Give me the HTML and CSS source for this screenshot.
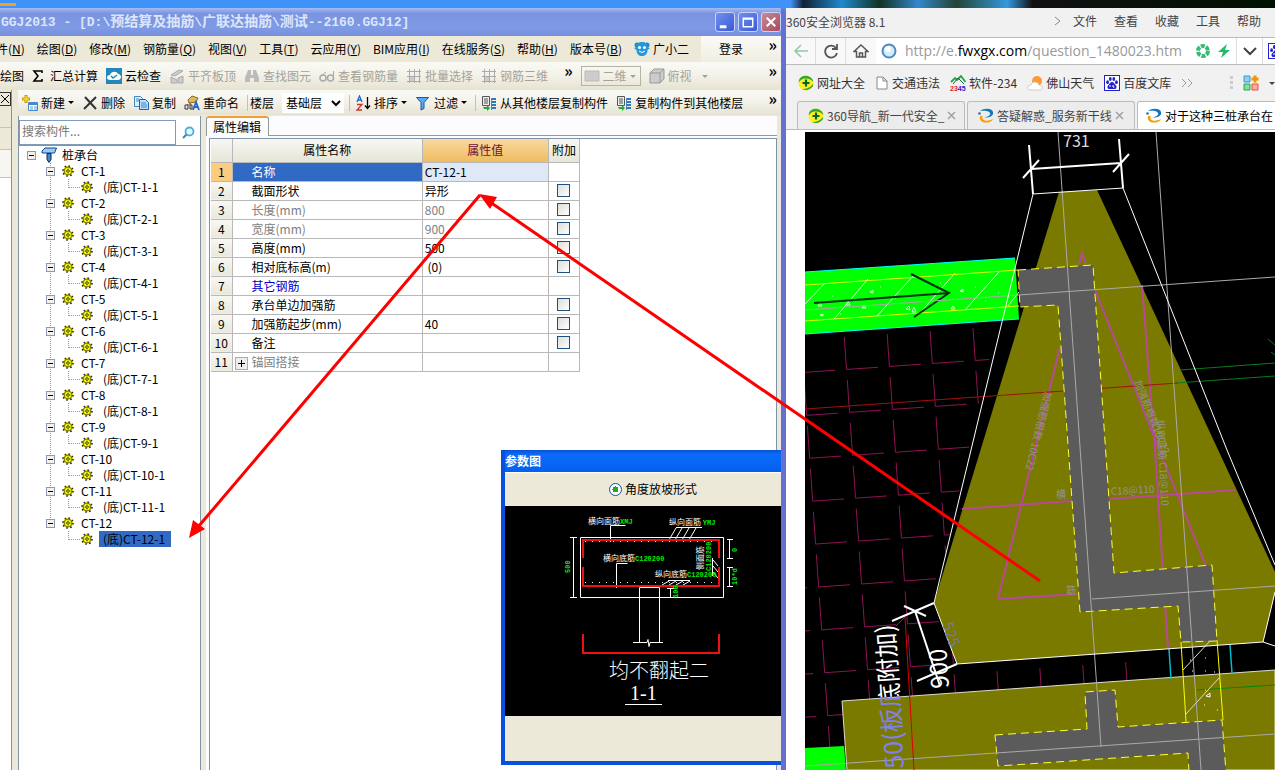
FILE: index.html
```
<!DOCTYPE html>
<html lang="zh-CN">

<head>
    <meta charset="UTF-8" />
    <title>GGJ2013</title>
    <link rel="stylesheet" href="styles.css">
</head>

<body>
    <svg class="defs" aria-hidden="true">
        <symbol id="gear" viewBox="0 0 12 12">
            <circle cx="6" cy="6" r="5" fill="#ff0" stroke="#222" stroke-width="1.6" stroke-dasharray="1.6 2.3" />
            <circle cx="6" cy="6" r="3.9" fill="#ff0" stroke="#332" stroke-width="0.7" />
            <path d="M6 2.5v7M2.5 6h7" stroke="#776" stroke-width="0.6" />
            <circle cx="6" cy="6" r="1.3" fill="#ff0" stroke="#222" stroke-width="0.8" />
        </symbol>
        <symbol id="paw" viewBox="0 0 16 16">
            <rect x="0.5" y="0.5" width="15" height="15" fill="#fff" stroke="#22c" />
            <ellipse cx="3.6" cy="7.2" rx="1.4" ry="1.9" fill="#22c" />
            <ellipse cx="6.3" cy="4" rx="1.4" ry="2" fill="#22c" />
            <ellipse cx="9.8" cy="4" rx="1.4" ry="2" fill="#22c" />
            <ellipse cx="12.4" cy="7.2" rx="1.4" ry="1.9" fill="#22c" />
            <path d="M8 7c2 0 2.3 2 4 3.4 1.2 1.6.2 3.6-1.6 3.6H5.6C3.8 14 2.8 12 4 10.4 5.7 9 6 7 8 7z" fill="#22c" />
            <path d="M6 10v2M9 10v2h1.5" stroke="#fff" fill="none" />
        </symbol>
        <symbol id="plus360" viewBox="0 0 16 16">
            <circle cx="8" cy="8" r="7.5" fill="#fe2" />
            <path d="M2 3a8 8 0 0 1 13.4 4C12 3 6 2.500 3 5 1.500 6.500.8 7 .6 7A8 8 0 0 1 2 3zM15 11a8 8 0 0 1-11 3c4 0 8-1 11-5z" fill="#3a3" />
            <path d="M8 4.5v7M4.5 8h7" stroke="#063" stroke-width="2.2" />
        </symbol>
        <symbol id="swirl" viewBox="0 0 16 16">
            <path d="M2 3C6 0 14 0 15 4c1 4-4 6-9 5.500C10 9 13 7 12 5 10 2 5 3 2 3z" fill="#17b" />
            <circle cx="1.500" cy="5.500" r="1.300" fill="#17b" />
            <path d="M2 8c-1 5 3 7 7 6.500 3 0 5-1.500 6-3.500-3 1.500-6 2-8 1.500C5 12 4 11 4.500 8z" fill="#f90" />
        </symbol>
        <symbol id="floors" viewBox="0 0 16 16">
            <path d="M1.500 1.500h7v9h-7z" fill="#eee" stroke="#555" />
            <path d="M3 4h4M3 6h4M3 8h4" stroke="#555" />
            <path d="M10 4h5M10 7h5M10 10h5M10 13h5" stroke="#37b" stroke-width="2" />
            <path d="M10.500 3v12" stroke="#48c" />
            <path d="M2 12h4v-2l3 3-3 3v-2H3z" fill="#2a3" />
        </symbol>
        <symbol id="grid3" viewBox="0 0 16 16">
            <path d="M1 3.500h14M1 8.500h14M1 13.500h14M3.500 1v14M8.500 1v14M13.500 1v14" stroke="#aaa" fill="none" />
            <path d="M4 9h4v4H4z" fill="#ccc" />
        </symbol>
    </svg>

    <div class="desktop">
        <div class="app">
            <div class="titlebar">
                <span class="title">GGJ2013 - [D:\<span>预结算及抽筋</span>\<span>广联达抽筋</span>\<span>测试</span>--2160.GGJ12]</span>
                <button class="win-btn" aria-label="Minimize"><svg viewBox="0 0 19 19"><path d="M4 13h7v3H4z" fill="#fff" /></svg></button>
                <button class="win-btn" aria-label="Maximize"><svg viewBox="0 0 19 19"><path d="M4.500 5.500h10v9h-10zM4 6.500h11" fill="none" stroke="#fff" stroke-width="1.500" /></svg></button>
                <button class="win-btn close" aria-label="Close"><svg viewBox="0 0 19 19"><path d="M5 5l9 9M14 5l-9 9" stroke="#fff" stroke-width="2.200" /></svg></button>
            </div>

            <div class="menubar">
                <button>件(<u>N</u>)</button>
                <button>绘图(<u>D</u>)</button>
                <button>修改(<u>M</u>)</button>
                <button>钢筋量(<u>Q</u>)</button>
                <button>视图(<u>V</u>)</button>
                <button>工具(<u>T</u>)</button>
                <button>云应用(<u>Y</u>)</button>
                <button>BIM应用(<u>I</u>)</button>
                <button>在线服务(<u>S</u>)</button>
                <button>帮助(<u>H</u>)</button>
                <button>版本号(<u>B</u>)</button>
                <button class="assistant"><svg class="icon" viewBox="0 0 16 16"><circle cx="3" cy="4" r="2.500" fill="#28c" /><circle cx="13" cy="4" r="2.500" fill="#28c" /><path d="M8 1c4 0 5 2 5.500 5l2.500 1-2.500 2c0 4-2.500 6-5.500 6s-5.500-2-5.500-6L0 7l2.500-1C3 3 4 1 8 1z" fill="#29d" /><circle cx="5.500" cy="6.500" r="1.500" fill="#fff" /><circle cx="10.500" cy="6.500" r="1.500" fill="#fff" /><path d="M5 10q3 3 6 0" stroke="#fff" fill="none" /></svg>广小二</button>
                <div class="account"><button>登录</button><span class="more">»</span></div>
            </div>

            <div class="toolbar">
                <button>绘图</button>
                <button><svg class="sigma" viewBox="0 0 10 12"><path d="M9 3V1H1l4 5-4 5h8V9" fill="none" stroke="#000" stroke-width="1.600" /></svg>汇总计算</button>
                <button><svg class="icon" viewBox="0 0 16 16"><path d="M0 0h16v16H0z" fill="#28b" /><path d="M4 12c-4 0-4-5 0-5 1-4 7-4 8-1 4 0 4 6 0 6z" fill="#fff" /><path d="M5 8l2 2 4-3" stroke="#28b" fill="none" stroke-width="1.500" /></svg>云检查</button>
                <button disabled><svg class="icon" viewBox="0 0 16 16"><path d="M2 7l8-5 4 1-8 5zM2 15V9l6 3v3zM9 15v-5l5-2v7z" fill="#ccc" stroke="#aaa" /></svg>平齐板顶</button>
                <button disabled><svg class="icon" viewBox="0 0 16 16"><path d="M4 2h3v5h2V2h3l3 8v4h-5v-4H6v4H1v-4z" fill="#bbb" /></svg>查找图元</button>
                <button disabled><svg class="icon" viewBox="0 0 16 16"><path d="M1 9l6-5M14.500 3v7" fill="none" stroke="#aaa" /><circle cx="4" cy="10" r="3" fill="none" stroke="#aaa" stroke-width="1.500" /><circle cx="11.500" cy="10" r="3" fill="none" stroke="#aaa" stroke-width="1.500" /></svg>查看钢筋量</button>
                <button disabled><svg class="icon"><use href="#grid3" /></svg>批量选择</button>
                <button disabled><svg class="icon"><use href="#grid3" /></svg>钢筋三维</button>
                <span class="more inner">»</span>
                <button class="view-mode" disabled><svg class="icon" viewBox="0 0 16 16"><path d="M1 3h14v10H1z" fill="#ccc" stroke="#bbb" /></svg>二维<i class="caret"></i></button>
                <button disabled><svg class="icon" viewBox="0 0 16 16"><path d="M1 5l4-4h10v10l-4 4H1zM1 5h10v10M11 5l4-4" fill="#ccc" stroke="#999" /></svg>俯视<i class="caret far"></i></button>
                <span class="more">»</span>
            </div>

            <div class="workspace">
                <div class="dock">
                    <button class="dock-close" aria-label="关闭"><svg viewBox="0 0 10 10"><path d="M1 1l8 8M9 1l-8 8" stroke="#000" /></svg></button>
                    <div class="dock-row"></div>
                    <div class="dock-row"></div>
                    <div class="dock-row light"></div>
                    <div class="dock-body"></div>
                </div>

                <div class="editor">
                    <div class="toolbar second">
                        <button><svg class="icon" viewBox="0 0 16 16"><path d="M4 0v8M0 4h8" stroke="#c90" stroke-width="3" /><path d="M4 1v6M1 4h6" stroke="#fe5" /><path d="M6.500 7.500h9v8h-9z" fill="#fff" stroke="#48c" /><path d="M7 8h8v2H7z" fill="#48c" /><path d="M8 12h3M8 14h3M12 12h3M12 14h3" stroke="#69c" /></svg>新建<i class="caret"></i></button>
                        <button><svg class="icon" viewBox="0 0 16 16"><path d="M3 2l11 12M14 2L2 14" stroke="#333" stroke-width="2" fill="none" /></svg>删除</button>
                        <button><svg class="icon" viewBox="0 0 16 16"><path d="M1.500 1.500h6l2 2v8h-8z" fill="#def" stroke="#48b" /><path d="M6.500 4.500h6l3 3v7h-9z" fill="#bdf" stroke="#269" /><path d="M8 8h5M8 10h6M8 12h6M3 4h3M3 6h3" stroke="#48b" /></svg>复制</button>
                        <button><svg class="icon" viewBox="0 0 16 16"><path d="M4 5l4-4 6 2-2 4-7 1z" fill="#db5" stroke="#863" /><path d="M9 15l3-8 3 8M10 12h4" stroke="#26c" stroke-width="1.800" fill="none" /><path d="M4 10H1v4h3zV9M6 8v6h2v-4H6" stroke="#333" fill="none" /></svg>重命名</button>
                        <label class="floor" for="floor">楼层</label>
                        <select id="floor"><option>基础层</option></select>
                        <button class="split"><svg class="icon" viewBox="0 0 16 16"><path d="M2 7l2.500-6L7 7M3 5h3" stroke="#26c" fill="none" stroke-width="1.300" /><path d="M2 9.500h5L2 15h5" stroke="#c33" fill="none" stroke-width="1.300" /><path d="M12.500 2v11M10 10.500l2.500 3 2.500-3" stroke="#000" fill="none" stroke-width="1.300" /></svg>排序<i class="caret"></i></button>
                        <button><svg class="icon" viewBox="0 0 16 16"><path d="M1.500 2.500h12l-4.500 5v6l-3 1.500V7.500z" fill="#5af" stroke="#258" /></svg>过滤<i class="caret"></i></button>
                        <button class="split"><svg class="icon"><use href="#floors" /></svg>从其他楼层复制构件</button>
                        <button><svg class="icon"><use href="#floors" /></svg>复制构件到其他楼层</button>
                        <span class="more">»</span>
                    </div>

                    <div class="panels">
                        <div class="components">
                            <div class="search">
                                <input type="text" placeholder="搜索构件..." aria-label="搜索构件">
                                <button aria-label="搜索"><svg viewBox="0 0 14 14"><circle cx="8.500" cy="5.500" r="4" fill="#dff" stroke="#5ad" stroke-width="1.800" /><path d="M5.500 8.500L2 12" stroke="#48b" stroke-width="2.200" /></svg></button>
                            </div>
                            <div class="tree">
                                <div class="node root"><button class="toggle" aria-label="折叠"></button><svg class="icon" viewBox="0 0 16 16"><path d="M1 4l3-3h11.500l-2 5H1z" fill="#9ce" stroke="#149" /><path d="M6 6.500h4v6l-2 3-2-3z" fill="#48c" stroke="#125" /></svg>桩承台</div>
                                <div class="branches">
                                    <div class="node"><button class="toggle" aria-label="折叠"></button><svg class="gear"><use href="#gear" /></svg><span>CT-1</span></div>
                                    <div class="node leaf"><i class="elbow"></i><svg class="gear"><use href="#gear" /></svg><span>(底)CT-1-1</span></div>
                                    <div class="node"><button class="toggle" aria-label="折叠"></button><svg class="gear"><use href="#gear" /></svg><span>CT-2</span></div>
                                    <div class="node leaf"><i class="elbow"></i><svg class="gear"><use href="#gear" /></svg><span>(底)CT-2-1</span></div>
                                    <div class="node"><button class="toggle" aria-label="折叠"></button><svg class="gear"><use href="#gear" /></svg><span>CT-3</span></div>
                                    <div class="node leaf"><i class="elbow"></i><svg class="gear"><use href="#gear" /></svg><span>(底)CT-3-1</span></div>
                                    <div class="node"><button class="toggle" aria-label="折叠"></button><svg class="gear"><use href="#gear" /></svg><span>CT-4</span></div>
                                    <div class="node leaf"><i class="elbow"></i><svg class="gear"><use href="#gear" /></svg><span>(底)CT-4-1</span></div>
                                    <div class="node"><button class="toggle" aria-label="折叠"></button><svg class="gear"><use href="#gear" /></svg><span>CT-5</span></div>
                                    <div class="node leaf"><i class="elbow"></i><svg class="gear"><use href="#gear" /></svg><span>(底)CT-5-1</span></div>
                                    <div class="node"><button class="toggle" aria-label="折叠"></button><svg class="gear"><use href="#gear" /></svg><span>CT-6</span></div>
                                    <div class="node leaf"><i class="elbow"></i><svg class="gear"><use href="#gear" /></svg><span>(底)CT-6-1</span></div>
                                    <div class="node"><button class="toggle" aria-label="折叠"></button><svg class="gear"><use href="#gear" /></svg><span>CT-7</span></div>
                                    <div class="node leaf"><i class="elbow"></i><svg class="gear"><use href="#gear" /></svg><span>(底)CT-7-1</span></div>
                                    <div class="node"><button class="toggle" aria-label="折叠"></button><svg class="gear"><use href="#gear" /></svg><span>CT-8</span></div>
                                    <div class="node leaf"><i class="elbow"></i><svg class="gear"><use href="#gear" /></svg><span>(底)CT-8-1</span></div>
                                    <div class="node"><button class="toggle" aria-label="折叠"></button><svg class="gear"><use href="#gear" /></svg><span>CT-9</span></div>
                                    <div class="node leaf"><i class="elbow"></i><svg class="gear"><use href="#gear" /></svg><span>(底)CT-9-1</span></div>
                                    <div class="node"><button class="toggle" aria-label="折叠"></button><svg class="gear"><use href="#gear" /></svg><span>CT-10</span></div>
                                    <div class="node leaf"><i class="elbow"></i><svg class="gear"><use href="#gear" /></svg><span>(底)CT-10-1</span></div>
                                    <div class="node"><button class="toggle" aria-label="折叠"></button><svg class="gear"><use href="#gear" /></svg><span>CT-11</span></div>
                                    <div class="node leaf"><i class="elbow"></i><svg class="gear"><use href="#gear" /></svg><span>(底)CT-11-1</span></div>
                                    <div class="node"><button class="toggle" aria-label="折叠"></button><svg class="gear"><use href="#gear" /></svg><span>CT-12</span></div>
                                    <div class="node leaf selected"><i class="elbow"></i><svg class="gear"><use href="#gear" /></svg><span>(底)CT-12-1</span></div>
                                </div>
                            </div>
                        </div>

                        <div class="properties">
                            <div class="prop-tabs"><button>属性编辑</button></div>
                            <div class="prop-body">
                                <table>
                                    <thead>
                                        <tr><th class="num"></th><th class="name">属性名称</th><th class="value">属性值</th><th class="extra">附加</th></tr>
                                    </thead>
                                    <tbody>
                                        <tr class="current"><th>1</th><td>名称</td><td>CT-12-1</td><td></td></tr>
                                        <tr><th>2</th><td>截面形状</td><td>异形</td><td><input type="checkbox" aria-label="截面形状"></td></tr>
                                        <tr class="dim"><th>3</th><td>长度(mm)</td><td>800</td><td><input type="checkbox" aria-label="长度"></td></tr>
                                        <tr class="dim"><th>4</th><td>宽度(mm)</td><td>900</td><td><input type="checkbox" aria-label="宽度"></td></tr>
                                        <tr><th>5</th><td>高度(mm)</td><td>500</td><td><input type="checkbox" aria-label="高度"></td></tr>
                                        <tr><th>6</th><td>相对底标高(m)</td><td>&nbsp;(0)</td><td><input type="checkbox" aria-label="相对底标高"></td></tr>
                                        <tr class="link"><th>7</th><td>其它钢筋</td><td></td><td></td></tr>
                                        <tr><th>8</th><td>承台单边加强筋</td><td></td><td><input type="checkbox" aria-label="承台单边加强筋"></td></tr>
                                        <tr><th>9</th><td>加强筋起步(mm)</td><td>40</td><td><input type="checkbox" aria-label="加强筋起步"></td></tr>
                                        <tr><th>10</th><td>备注</td><td></td><td><input type="checkbox" aria-label="备注"></td></tr>
                                        <tr class="dim group"><th>11</th><td><button class="expand" aria-label="展开"></button>锚固搭接</td><td></td><td></td></tr>
                                    </tbody>
                                </table>
                            </div>
                        </div>
                    </div>
                </div>
            </div>

            <div class="dialog">
                <div class="dialog-title">参数图</div>
                <div class="dialog-options"><label><input type="radio" checked>角度放坡形式</label></div>
                <svg class="section" viewBox="505 506 276 210">
                    <g fill="none" stroke="#fff">
                        <path d="M580.500 537.500h143v60h-143zM573.500 537v61M570 537.500h7M570 597.500h7M639.500 597v-9.500h20V597M639.500 597v45M659.500 597v45M633 642.500h14l1-3 1 7 1-4h13" />
                        <path d="M610.500 542v-16.500h15M616.500 588v-24.500h11M669 540l7-12M675 540l7-12M682 540l7-12M689 540l7-12M676 527.500h26M662 585l7-4M669 585l7-4M676 585l7-4M683 585l7-4M668 580.500h22M667 588.500h7M670.500 588v9M727 539.500h6M729.500 540v19M727 558.500h6M727 567.500h6M729.500 568v18M727 586.500h6M712.500 558v18M713 560l5 6M713 566l5 6M713 572l5 6M625 704.500h37" />
                    </g>
                    <g fill="none" stroke="#e11" stroke-width="2">
                        <path d="M583 558v-18h136v18M583 567v19h136v-19M583 634v19h136v-19" />
                    </g>
                    <path d="M585 541.500h132M585 582.500h132" stroke="#eee" stroke-dasharray="1 6" />
                    <g class="label">
                        <text x="588" y="524">横向面筋<tspan>XMJ</tspan></text>
                        <text x="669" y="525">纵向面筋 <tspan>YMJ</tspan></text>
                        <text x="603" y="561">横向底筋<tspan>C120200</tspan></text>
                        <text x="655" y="577">纵向底筋<tspan>C120200</tspan></text>
                        <text transform="translate(703 570) rotate(-90)">侧面筋</text>
                        <text transform="translate(711 571) rotate(-90)"><tspan>C120200</tspan></text>
                        <text transform="translate(570 573) rotate(-90)"><tspan>500</tspan></text>
                        <text transform="translate(737 552) rotate(-90)"><tspan>0</tspan></text>
                        <text transform="translate(737 585) rotate(-90)"><tspan>10*d</tspan></text>
                        <text transform="translate(678 598) rotate(-90)"><tspan>100</tspan></text>
                    </g>
                    <text class="caption" x="609" y="678">均不翻起二</text>
                    <text class="caption small" x="630" y="700">1-1</text>
                </svg>
                <div class="dialog-footer"></div>
            </div>
        </div>

        <div class="browser">
            <div class="browser-title">
                <span class="name">360安全浏览器 8.1</span>
                <svg class="angle" viewBox="0 0 8 10"><path d="M1 1l5 4-5 4" fill="none" stroke="#888" /></svg>
                <button>文件</button>
                <button>查看</button>
                <button>收藏</button>
                <button>工具</button>
                <button>帮助</button>
            </div>
            <div class="address">
                <button aria-label="后退"><svg viewBox="0 0 16 16"><path d="M15 8H2M8 2L2 8l6 6" fill="none" stroke="#8dcaa5" stroke-width="1.500" /></svg></button>
                <button aria-label="刷新"><svg viewBox="0 0 16 16"><path d="M13 5a6 6 0 1 0 1 5M14 1v5H9" fill="none" stroke="#555" stroke-width="1.800" /></svg></button>
                <button class="home" aria-label="主页"><svg viewBox="0 0 16 16"><path d="M1 8.500L8 2l7 6.500h-2.500V14h-9V8.500zM6.500 14v-4h3v4" fill="none" stroke="#555" stroke-width="1.500" /></svg></button>
                <svg class="globe" viewBox="0 0 16 16"><circle cx="8" cy="8" r="6.500" fill="#cef" stroke="#58b" stroke-width="2" /><circle cx="7" cy="6" r="3" fill="#fff" /></svg>
                <div class="url" role="textbox" aria-label="地址" contenteditable="true">http://e.<b>fwxgx.com</b>/question_1480023.htm</div>
                <svg class="tool" viewBox="0 0 16 16"><circle cx="8" cy="8" r="5" fill="none" stroke="#3b7" stroke-width="4" stroke-dasharray="4 1.200" /></svg>
                <svg class="tool" viewBox="0 0 16 16"><path d="M11 1L2 9h5l-2 6 9-8H9z" fill="#2b6" /></svg>
                <button class="drop" aria-label="展开"><svg viewBox="0 0 16 16"><path d="M2 5l6 6 6-6" fill="none" stroke="#444" stroke-width="2" /></svg></button>
                <svg class="engine" viewBox="0 0 16 16"><use href="#paw" /></svg>
            </div>
            <div class="bookmarks">
                <a href="#"><svg class="icon"><use href="#plus360" /></svg>网址大全</a>
                <a href="#"><svg class="page" viewBox="0 0 12 14"><path d="M1 1h6l4 4v8H1zM7 1v4h4" fill="#fff" stroke="#888" /></svg>交通违法</a>
                <a href="#"><svg class="icon" viewBox="0 0 16 16"><path d="M1 7l4-4 2 2 4-4 4.500 6" fill="none" stroke="#2a4" stroke-width="1.800" /><path d="M3 9l5-6 6 6" fill="none" stroke="#164" /><text class="logo" x="0" y="16"><tspan fill="#d22">23</tspan><tspan fill="#22c">45</tspan></text></svg>软件-234</a>
                <a href="#"><svg class="icon" viewBox="0 0 16 16"><circle cx="10" cy="6" r="5" fill="#f93" /><path d="M3 15c-4-1-2-5 1-5 1-4 7-4 8 0 4 0 4 5 1 5z" fill="#fff" stroke="#bbb" stroke-width="0.700" /></svg>佛山天气</a>
                <a href="#"><svg class="icon"><use href="#paw" /></svg>百度文库</a>
                <svg class="chevrons" viewBox="0 0 12 10"><path d="M1 1l4 4-4 4M7 1l4 4-4 4" fill="none" stroke="#999" /></svg>
                <svg class="dots" viewBox="0 0 3 14"><path d="M0 0h3v3H0zM0 5h3v3H0zM0 10h3v3H0z" fill="#ccc" /></svg>
                <svg class="icon" viewBox="0 0 16 16"><path d="M1 1h6v6H1z" fill="#9ce" stroke="#39c" /><path d="M12 .5v7M8.500 4h7" stroke="#e90" stroke-width="3" /><path d="M1 9h6v6H1z" fill="#8d9" stroke="#2a5" /><path d="M9 9h6v6H9z" fill="#fa9" stroke="#d54" /></svg>
                <i class="caret"></i>
            </div>
            <div class="tabs">
                <div class="tab"><svg class="icon"><use href="#plus360" /></svg><span>360导航_新一代安全_</span><button aria-label="关闭"><svg viewBox="0 0 9 9"><path d="M1 1l7 7M8 1l-7 7" stroke="#999" stroke-width="1.200" /></svg></button></div>
                <div class="tab"><svg class="icon"><use href="#swirl" /></svg><span>答疑解惑_服务新干线</span><button aria-label="关闭"><svg viewBox="0 0 9 9"><path d="M1 1l7 7M8 1l-7 7" stroke="#999" stroke-width="1.200" /></svg></button></div>
                <div class="tab active"><svg class="icon"><use href="#swirl" /></svg><span>对于这种三桩承台在</span></div>
            </div>
            <div class="page-view">
                <svg class="cad" viewBox="805 132 470 638" preserveAspectRatio="xMinYMin slice">
                    <defs>
                        <pattern id="mesh" width="43" height="43" patternUnits="userSpaceOnUse" patternTransform="translate(846 369) rotate(-4) translate(-5 -38)">
                            <path d="M5.500 6v32.500H37" fill="none" stroke="#8c1254" />
                        </pattern>
                        <clipPath id="overSlab"><path d="M805 600h140v93l-140 10z" /></clipPath>
                        <clipPath id="onSlab"><path d="M805 703l140-10v77H805z" /></clipPath>
                    </defs>
                    <path d="M805 132h470v638H805z" fill="#000" />
                    <path d="M805 337l192-13-63 279 23 61 175-12v30l-290 19 3 45-40 2z" fill="url(#mesh)" />

                    <!-- pile cap -->
                    <path d="M1059 192l38-2 178 382v20l-12 50-306 22-23-61z" fill="#7a7a00" />
                    <path d="M842 701l433-31v100H847z" fill="#7a7a00" stroke="#ddc" />

                    <!-- beam -->
                    <path d="M805 272l210-14 4 61-214 15z" fill="#0f0" />
                    <path d="M805 272l210-14M805 334l214-15" stroke="#0ff" />
                    <path d="M805 285l213-15M805 321l214-15" stroke="#df0" />
                    <path d="M805 304l20-21M834 319l34-40M877 316l36-40M920 313l35-40M965 310l34-38M1008 306l11-14" stroke="#cfc" />
                    <g fill="none" stroke="#cfc">
                        <path d="M818 306l2-3 2 3zM846 305l2-4 2 4zM862 308l2-3 2 3zM870 292l3-2v3zM906 309l3-3 1 4zM912 312l2-5 2 5zM960 291l3-2v3zM951 309l2-3 2 3zM820 315l3-1v2z" />
                        <path d="M832 296h1M855 300h1M880 287h1M895 298h1M925 308h1M940 283h1M975 287h1M985 301h1M998 293h1M840 314h1" />
                    </g>
                    <path d="M814 303l135-10M911 274l38 19-35 24" fill="none" stroke="#031" stroke-width="2" />
                    <path d="M805 748l39-2 2 24h-41z" fill="#0f0" />

                    <!-- rebar -->
                    <g fill="none" stroke="#b54a98" stroke-width="2">
                        <path d="M1079 264l3-11 4 11M1093 285l113 281M1142 285l13 165 13 198M1060 347l-62 252 80-5M962 509l110-8M1110 499l125-9" />
                    </g>
                    <path d="M805 409l373-26" stroke="#a01010" />
                    <path d="M1176 383l99-7M1180 370l95-7M1268 339l7 6M1271 352l4 3" stroke="#0a7a20" />
                    <path d="M1197 690l78-5" stroke="#080" />

                    <!-- walls -->
                    <g fill="#5b5b5b" stroke="#ff3" stroke-dasharray="8 5">
                        <path d="M1018 270l75-5 21 308 98-8 5 76-36 1-3-36-98 6-22-307-38 2z" />
                        <path d="M995 735l92-6-2-37 30-2 3 37 104-7 4 52h-37l-1-19-190 13z" />
                    </g>
                    <path d="M1181 642l5 80M1217 640l6 80" stroke="#ff0" />
                    <path d="M1183 670l27-29M1186 714l33-36" stroke="#ddc" />
                    <path d="M1190 660h1M1205 658h1M1205 671h1M1192 671h1M1214 672h1M1205 690h1M1217 710h1M1204 705h1M1206 696l4-3v4z" stroke="#fff" fill="none" />
                    <path d="M1169 649l2 30M1230 645l2 28" stroke="#0bc" stroke-width="1.500" />

                    <!-- axes -->
                    <g stroke="#aaa">
                        <path d="M1058 132l43 615M1156 132l45 638M805 310l470-33M1092 599l183-13M805 766l470-32" />
                    </g>

                    <!-- outline and dimensions -->
                    <g fill="none" stroke="#fff">
                        <path d="M1275 565l-48-115-104-262-90 6-62 256-37 153 23 61 306-22 12 4M1263 642l12-50" />
                        <path d="M1029 145l4 49M1119 139l4 49M1031 169l90-6M1023 178l16-18M1113 172l16-18" stroke-width="2" />
                        <path d="M892 621l42-18M904 606l22 10M915 611l25 75M917 681l40-17" stroke-width="2" />
                    </g>
                    <path d="M896 626l9-9 9 153" fill="none" stroke="#d00" />

                    <text class="dim-text" x="1063" y="147">731</text>
                    <text class="dim-text big" transform="translate(949 688) rotate(-94)">900</text>
                    <g clip-path="url(#overSlab)"><text class="note" fill="#fff" transform="translate(904 768) rotate(-94)">50(板底附加)</text></g>
                    <g clip-path="url(#onSlab)"><text class="note" fill="#8080f0" transform="translate(904 768) rotate(-94)">50(板底附加)</text></g>
                    <g class="bar-text">
                        <text class="size" transform="translate(942 624) rotate(72)">525</text>
                        <text transform="translate(1045 391) rotate(104)">加强筋根数 10C22</text>
                        <text transform="translate(1134 382) rotate(68)">加强筋根数10C22</text>
                        <text transform="translate(1157 420) rotate(87)">纵向底筋 C18@110</text>
                        <text x="1056" y="498">横</text>
                        <text transform="translate(1111 495) rotate(-3)">C18@110</text>
                        <text x="1066" y="594">筋</text>
                    </g>
                </svg>
            </div>
        </div>
    </div>

    <svg class="pointer" viewBox="0 0 1275 770" preserveAspectRatio="xMinYMin meet" aria-hidden="true">
        <path d="M1040 581L490 202M480 195L198 527" fill="none" stroke="#f00" stroke-width="3" />
        <path d="M479 194l18 3-7 12zM189 538l4-18 12 9z" fill="#f00" />
    </svg>
</body>

</html>
```
FILE: styles.css
```
* {
    box-sizing: border-box;
}

body {
    margin: 0;
    font-family: "Noto Sans CJK SC", sans-serif;
    font-size: 12px;
    line-height: 16px;
    color: #000;
    overflow: hidden;
}

button {
    border: 0;
    padding: 0;
    background: none;
    font: inherit;
    color: inherit;
    white-space: nowrap;
}

.defs {
    position: absolute;
    width: 0;
    height: 0;
}

.icon {
    width: 16px;
    height: 16px;
    flex: none;
}

.caret {
    width: 0;
    border: 3px solid transparent;
    border-top-color: currentColor;
    border-bottom: 0;
    flex: none;
}

.desktop {
    display: grid;
    grid-template-columns: minmax(0, 786fr) minmax(0, 489fr);
    min-height: 100vh;
    padding-top: 8px;
    background: linear-gradient(#f5a020, #f5a020) 0 3px / 16px 3px no-repeat, linear-gradient(90deg, transparent 62%, #123 63%, #28c 66%, #132 69%, #38c 72%, #243 75%, #39d 79%, #111 81%, #010 100%), #3f93f8;
}

/* application window */
.app {
    position: relative;
    display: flex;
    flex-direction: column;
    border-right: 5px solid #6470d2;
    border-top-right-radius: 6px;
    background: #ece9d8;
    overflow: hidden;
}

.titlebar {
    display: flex;
    align-items: center;
    gap: 3px;
    height: 28px;
    padding-left: 1px;
    background: linear-gradient(#a5bcf2, #7a93e0 20%, #7f9ae6 70%, #7890dc);
    color: #dce6fa;
}

.title {
    flex: 1;
    font-family: "Liberation Mono", "Noto Sans CJK SC", monospace;
    font-size: 13px;
    font-weight: bold;
    white-space: nowrap;
}

.title span {
    font-size: 14px;
}

.win-btn {
    width: 20px;
    height: 20px;
    border: 1px solid #c6d2f6;
    border-radius: 3px;
    background: linear-gradient(135deg, #7090f0, #3a5ad8);
}

.win-btn svg {
    display: block;
    width: 100%;
}

.win-btn.close {
    background: linear-gradient(135deg, #c98a9a, #a84a5c);
}

.menubar {
    display: flex;
    align-items: center;
    gap: 12px;
    height: 26px;
    margin-left: -4px;
    background: #ece9d8;
}

.menubar .assistant {
    display: flex;
    align-items: center;
    gap: 3px;
}

.account {
    align-self: stretch;
    flex: 1;
    display: flex;
    align-items: center;
    padding-left: 18px;
    background: linear-gradient(#fbfaf6, #f0eee2);
}

.more {
    align-self: flex-start;
    margin-left: auto;
    padding-right: 4px;
    font-size: 16px;
    font-weight: bold;
}

.more.inner {
    margin-left: 8px;
    padding: 0;
}

.toolbar {
    display: flex;
    align-items: center;
    gap: 8px;
    height: 28px;
    background: linear-gradient(#fafaf5, #f3f1e8 50%, #e6e3d2);
}

.toolbar button {
    display: flex;
    align-items: center;
    gap: 3px;
}

.toolbar button:disabled {
    color: #a5a397;
}

.sigma {
    width: 12px;
    height: 12px;
    margin-right: 3px;
}

.toolbar .view-mode {
    height: 20px;
    padding: 0 4px 0 2px;
    border: 1px solid #b5b3a5;
}

.toolbar .far {
    margin-left: 7px;
}

.toolbar .split {
    padding-left: 5px;
    border-left: 1px solid #c5c2b2;
}

.toolbar select {
    width: 62px;
    height: 20px;
    margin-right: -3px;
    padding: 0;
    border: 0;
    background: #fff;
    font: inherit;
}

.floor {
    padding-left: 2px;
    border-left: 1px solid #c5c2b2;
}

.workspace {
    flex: 1;
    display: flex;
}

.dock {
    display: flex;
    flex-direction: column;
    width: 12px;
    margin-right: 6px;
    border-right: 1px solid #7f94a8;
}

.dock-close {
    width: 12px;
    height: 14px;
    margin: 2px 0 0 -1px;
    border: 1px solid #333;
}

.dock-close svg {
    display: block;
    width: 100%;
}

.dock-row {
    height: 22px;
    border-bottom: 1px solid #c9c5b2;
}

.dock-row.light {
    height: 28px;
    background: #f7f6f0;
}

.dock-body {
    flex: 1;
    background: #fff;
}

.editor {
    flex: 1;
    min-width: 0;
    display: flex;
    flex-direction: column;
}

.toolbar.second {
    height: 25px;
    padding-left: 4px;
}

.panels {
    flex: 1;
    display: flex;
    gap: 5px;
    padding-top: 1px;
}

/* component tree */
.components {
    width: 183px;
    border: 1px solid #7f94a8;
    border-width: 0 1px;
    background: #fff;
}

.search {
    display: flex;
    height: 30px;
    padding-top: 4px;
    border-bottom: 1px solid #7f94a8;
}

.search input {
    width: 157px;
    padding: 0 2px 4px;
    border: 1px solid #7f9db9;
    font: inherit;
}

.search input::placeholder {
    color: #777;
}

.search button {
    flex: 1;
}

.search svg {
    display: block;
    width: 14px;
    margin: auto;
}

.tree {
    padding-top: 1px;
}

.node {
    display: flex;
    align-items: center;
    gap: 7px;
    height: 16px;
    padding-left: 27px;
}

.node.root {
    padding-left: 8px;
    gap: 5px;
}

.node span {
    padding-right: 6px;
    white-space: nowrap;
}

.toggle {
    width: 9px;
    height: 9px;
    border: 1px solid #8a98b0;
    background: linear-gradient(#000, #000) center / 5px 1px no-repeat, #f2f1ec;
}

.branches {
    background: repeating-linear-gradient(#999 0 1px, transparent 1px 2px) 31px 0 / 1px calc(100% - 24px) no-repeat;
}

.gear {
    width: 12px;
    height: 12px;
    flex: none;
}

.node.leaf {
    gap: 1px;
    padding-left: 49px;
}

.node.leaf span {
    padding-left: 4px;
    margin-left: 5px;
}

.elbow {
    align-self: flex-start;
    width: 12px;
    height: 9px;
    border-left: 1px dotted #999;
    border-bottom: 1px dotted #999;
}

.node.selected span {
    background: #316ac5;
}

/* property table */
.properties {
    flex: 1;
    display: flex;
    flex-direction: column;
    margin-right: 4px;
    background: #fcfcfe;
}

.prop-tabs {
    height: 20px;
    border-bottom: 1px solid #919b9c;
}

.prop-tabs button {
    height: 20px;
    padding: 0 7px 0 6px;
    border: 1px solid #919b9c;
    border-top: 2px solid #f0a030;
    border-bottom: 0;
    border-radius: 3px 3px 0 0;
    background: #fcfcfe;
}

.prop-body {
    flex: 1;
    margin: 2px 0 0 3px;
    padding-left: 1px;
    border: 1px solid #7f94a8;
    border-bottom: 0;
    background: #fff;
}

table {
    border-collapse: collapse;
    table-layout: fixed;
    width: 369px;
}

th,
td {
    height: 19px;
    padding: 0 2px;
    border: 1px solid #b8b8b8;
    font-weight: normal;
    line-height: 18px;
    text-align: left;
    white-space: nowrap;
}

thead th {
    height: 23px;
    border-top: 0;
    background: linear-gradient(#f8f7f2, #e6e5d8);
    text-align: center;
}

tbody th {
    padding: 0;
    background: linear-gradient(#f8f7f2, #e9e8dc);
    text-align: center;
}

tr > :first-child {
    border-left: 0;
}

.num {
    width: 21px;
}

.name {
    width: 190px;
}

thead .value {
    width: 126px;
    background: linear-gradient(#f8d9a0, #efbc60);
    color: #701030;
}

.extra {
    width: 31px;
}

td:nth-child(2) {
    padding-left: 19px;
}

td:last-child {
    text-align: center;
}

.dim td {
    color: #808080;
}

.link td {
    color: #0000c8;
}

.current th {
    background: #fbcb80;
}

.current td:nth-child(2) {
    background: #316ac5;
    color: #fff;
}

.current td:nth-child(3) {
    background: #dfe8f6;
}

td input {
    appearance: none;
    display: block;
    width: 13px;
    height: 13px;
    margin: 0 auto;
    border: 1px solid #1c5180;
    background: linear-gradient(135deg, #dcdcd7, #fff);
}

.group td:nth-child(2) {
    padding-left: 2px;
}

.expand {
    width: 13px;
    height: 13px;
    margin-right: 4px;
    border: 1px solid #aaa;
    background: linear-gradient(#000, #000) center / 7px 1px no-repeat, linear-gradient(#000, #000) center / 1px 7px no-repeat, #eee;
    vertical-align: -2px;
}

/* section dialog */
.dialog {
    position: absolute;
    right: 0;
    bottom: 5px;
    display: flex;
    flex-direction: column;
    width: 280px;
    border: 4px solid #0a4fdc;
    border-width: 0 0 4px 4px;
    background: #ece9d8;
}

.dialog-title {
    height: 22px;
    background: linear-gradient(#0a50d8, #0a6cf8 20%, #0460f0);
    color: #fff;
    font-weight: bold;
    line-height: 22px;
}

.dialog-options {
    padding: 8px 0 9px 104px;
    border-top: 1px solid #fff;
}

.dialog-options label {
    display: flex;
    align-items: center;
    gap: 3px;
}

.dialog-options input {
    appearance: none;
    width: 13px;
    height: 13px;
    margin: 0;
    border: 1px solid #1c5180;
    border-radius: 50%;
    background: radial-gradient(circle, #2a2 0 3px, #fff 3px);
}

.section {
    display: block;
    width: 100%;
    background: #000;
}

.label {
    font-size: 8px;
    fill: #fff;
}

.label tspan {
    font-family: "Liberation Mono", monospace;
    font-size: 7px;
    font-weight: bold;
    fill: #0e0;
}

.caption {
    font-size: 20px;
    fill: #fff;
    font-weight: 300;
}

.caption.small {
    font-family: "Liberation Serif", serif;
}

.dialog-footer {
    height: 45px;
}

/* browser window */
.browser {
    display: flex;
    flex-direction: column;
    background: #f1f1f1;
    color: #444;
    overflow: hidden;
}

.browser-title {
    display: flex;
    align-items: center;
    gap: 17px;
    height: 29px;
    padding: 0 14px 4px 0;
}

.browser-title .name {
    flex: 1;
    padding-top: 2px;
}

.angle {
    width: 8px;
    height: 10px;
    margin-right: -6px;
}

.address {
    display: flex;
    align-items: center;
    height: 28px;
    border: 1px solid #bbb;
    border-width: 1px 0;
    background: #fff;
}

.address button {
    align-self: stretch;
    width: 30px;
    border-right: 1px solid #ddd;
    background: #f8f8f8;
}

.address svg {
    display: block;
    width: 16px;
    height: 16px;
    margin: auto;
    flex: none;
}

.address .home {
    border: 0;
}

.address .globe {
    margin: 0 8px 0 5px;
}

.url {
    flex: 1;
    color: #999;
    font-family: "Open Sans", "Noto Sans", sans-serif;
    font-size: 14px;
    white-space: nowrap;
    line-height: 24px;
}

.url b {
    color: #000;
    font-weight: normal;
}

.address .tool {
    margin: 0 0 0 5px;
}

.address .drop {
    width: 27px;
    margin-left: 4px;
    border-left: 1px solid #ddd;
    background: #fff;
}

.address .engine {
    width: 16px;
    margin: 0 -9px 0 5px;
}

.bookmarks {
    display: flex;
    align-items: center;
    gap: 10px;
    height: 36px;
    padding-left: 12px;
}

.bookmarks a {
    display: flex;
    align-items: center;
    gap: 3px;
    color: #333;
    text-decoration: none;
    white-space: nowrap;
}

.page {
    width: 12px;
    height: 14px;
    margin: 0 1px;
}

.logo {
    font-family: "Liberation Sans", sans-serif;
    font-size: 7px;
    font-weight: bold;
}

.chevrons {
    width: 12px;
    height: 10px;
}

.dots {
    width: 3px;
    height: 14px;
    margin-left: auto;
}

.tabs {
    display: flex;
    gap: 2px;
    height: 29px;
    padding-left: 11px;
    border-bottom: 1px solid #bbb;
}

.tab {
    display: flex;
    align-items: center;
    gap: 3px;
    width: 168px;
    flex: none;
    padding: 0 10px;
    border: 1px solid #bbb;
    border-bottom: 0;
    border-radius: 3px 3px 0 0;
    background: #ececec;
}

.tab span {
    flex: 1;
    white-space: nowrap;
}

.tab button svg {
    display: block;
    width: 9px;
    height: 9px;
}

.tab.active {
    padding-left: 8px;
    background: #fff;
    color: #000;
}

.page-view {
    flex: 1;
    display: flex;
    min-height: 0;
    padding: 2px 0 0 19px;
    background: #fff;
}

.cad {
    width: 100%;
    flex: 1;
    min-height: 0;
}

.dim-text {
    fill: #ddd;
    font-size: 16px;
}

.dim-text.big {
    fill: #fff;
    font-size: 24px;
}

.note {
    font-size: 25px;
}

.bar-text {
    font-size: 10px;
    fill: #93938c;
}

.bar-text .size {
    font-size: 15px;
    fill: #7878a0;
}

/* arrows drawn across both windows */
.pointer {
    position: absolute;
    left: 0;
    top: 0;
    width: 100%;
    pointer-events: none;
}
```
